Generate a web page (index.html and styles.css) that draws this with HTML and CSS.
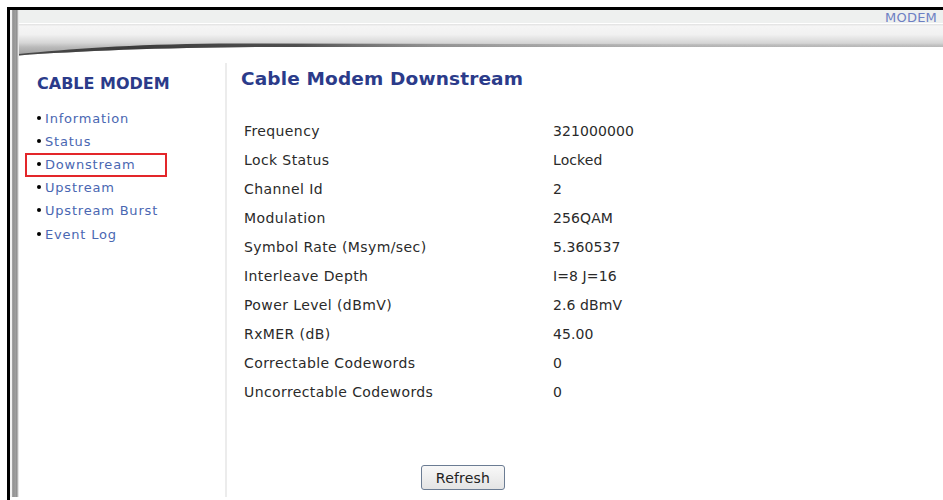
FILE: index.html
```html
<!DOCTYPE html>
<html lang="en">
<head>
<meta charset="utf-8">
<title>Cable Modem Downstream</title>
<link rel="stylesheet" href="styles.css">
</head>
<body>
<div class="frame">
  <div class="rail"></div>
  <div class="page">
    <header class="masthead">
      <div class="topbar"><span class="brand">MODEM</span></div>
      <svg class="swoosh" viewBox="0 0 924 35" preserveAspectRatio="none" aria-hidden="true">
        <defs>
          <linearGradient id="tube" x1="0" y1="0" x2="0" y2="33" gradientUnits="userSpaceOnUse">
            <stop offset="0" stop-color="#d8d8d8"/>
            <stop offset="0.1" stop-color="#f5f5f5"/>
            <stop offset="0.35" stop-color="#f1f1f1"/>
            <stop offset="0.6" stop-color="#d6d6d6"/>
            <stop offset="0.73" stop-color="#bababa"/>
            <stop offset="1" stop-color="#9a9a9a"/>
          </linearGradient>
          <linearGradient id="wedge" x1="0" y1="0" x2="924" y2="0" gradientUnits="userSpaceOnUse">
            <stop offset="0" stop-color="#3a3a3a" stop-opacity="0.85"/>
            <stop offset="0.12" stop-color="#2e2e2e" stop-opacity="0.9"/>
            <stop offset="0.3" stop-color="#3a3a3a" stop-opacity="0.85"/>
            <stop offset="0.45" stop-color="#707070" stop-opacity="0.6"/>
            <stop offset="0.7" stop-color="#9c9c9c" stop-opacity="0.35"/>
            <stop offset="1" stop-color="#b0b0b0" stop-opacity="0.2"/>
          </linearGradient>
        </defs>
        <!-- light tube with a curved lower edge -->
        <path d="M0 1 H924 V24 L250 24 C150 24.5 60 28 0 32.5 Z" fill="url(#tube)"/>
        <!-- dark tapered sweep along the lower edge -->
        <path d="M0 31 C50 26 110 21.5 200 20.5 L924 21.5 L924 24 L250 24 C150 24.5 60 28 0 32.5 Z" fill="url(#wedge)"/>
      </svg>
    </header>
    <div class="layout">
      <nav class="sidebar">
        <h2 class="sidebar-title">CABLE MODEM</h2>
        <ul class="menu">
          <li><a href="#">Information</a></li>
          <li><a href="#">Status</a></li>
          <li class="current"><a href="#">Downstream</a></li>
          <li><a href="#">Upstream</a></li>
          <li><a href="#">Upstream Burst</a></li>
          <li><a href="#">Event Log</a></li>
        </ul>
      </nav>
      <main class="content">
        <h1 class="title">Cable Modem Downstream</h1>
        <table class="stats">
          <tr><td>Frequency</td><td>321000000</td></tr>
          <tr><td>Lock Status</td><td>Locked</td></tr>
          <tr><td>Channel Id</td><td>2</td></tr>
          <tr><td>Modulation</td><td>256QAM</td></tr>
          <tr><td>Symbol Rate (Msym/sec)</td><td>5.360537</td></tr>
          <tr><td>Interleave Depth</td><td>I=8 J=16</td></tr>
          <tr><td>Power Level (dBmV)</td><td>2.6 dBmV</td></tr>
          <tr><td>RxMER (dB)</td><td>45.00</td></tr>
          <tr><td>Correctable Codewords</td><td>0</td></tr>
          <tr><td>Uncorrectable Codewords</td><td>0</td></tr>
        </table>
        <div class="actions"><button class="btn" type="button">Refresh</button></div>
      </main>
    </div>
  </div>
</div>
</body>
</html>
```

FILE: styles.css
```css
html, body {
  margin: 0;
  padding: 0;
  background: #fff;
}

body {
  font-family: "DejaVu Sans", Verdana, sans-serif;
  color: #2a2a2a;
  overflow: hidden;
}

.frame {
  margin: 7px 0 0 7px;
  height: 493px;
  box-sizing: border-box;
  padding-bottom: 3px;
  border-top: 3px solid #000;
  border-left: 3px solid #000;
  display: flex;
}

/* vertical bevel strip along the left edge */
.rail {
  width: 9px;
  flex: none;
  background: linear-gradient(to right,
    #f2f2f2 0, #f2f2f2 2px,
    #a9a9a9 2px, #8f8f8f 4px, #a4a4a4 5px, #8c8c8c 7px,
    #d8d8d8 8px, #f4f4f4 9px);
}

.page {
  flex: 1;
  display: flex;
  flex-direction: column;
  min-width: 0;
}

.topbar {
  height: 13px;
  background: #eef0ef;
  text-align: right;
  padding-right: 6px;
  line-height: 13px;
}

.brand {
  font-size: 13px;
  letter-spacing: 0.2px;
  color: #6d80c3;
}

.swoosh {
  display: block;
  width: 100%;
  height: 35px;
}

.layout {
  flex: 1;
  display: flex;
}

.sidebar {
  width: 208px;
  flex: none;
  box-sizing: border-box;
  margin-top: 5px;
  padding: 11px 0 0 18px;
  border-right: 2px solid #ececec;
}

.sidebar-title {
  margin: 0;
  font-size: 16px;
  line-height: 19px;
  font-weight: bold;
  color: #2b3b8a;
}

.menu {
  list-style: none;
  margin: 13.5px 0 0;
  padding: 0;
}

.menu li {
  position: relative;
  font-size: 13px;
  line-height: 23px;
}

.menu li:last-child {
  margin-top: 1px;
}

.menu li::before {
  content: "";
  display: inline-block;
  width: 4px;
  height: 4px;
  border-radius: 50%;
  background: #000;
  margin-right: 4px;
  vertical-align: 3px;
}

.menu a {
  color: #4a67b2;
  text-decoration: none;
  letter-spacing: 0.8px;
}

/* red highlight box around the active entry */
.menu li.current::after {
  content: "";
  position: absolute;
  left: -12px;
  top: 0.5px;
  width: 142px;
  height: 24px;
  box-sizing: border-box;
  border: 2px solid #e3262a;
}

.content {
  flex: 1;
  padding: 10px 0 0 14px;
}

.title {
  margin: 0;
  font-size: 18.5px;
  line-height: 22px;
  font-weight: bold;
  letter-spacing: 0.15px;
  color: #2b3b8a;
}

.stats {
  margin-top: 26px;
  border-collapse: collapse;
  font-size: 14px;
}

.stats td {
  height: 29px;
  padding: 0 0 0 3px;
  vertical-align: middle;
}

.stats td:first-child {
  width: 306px;
  letter-spacing: 0.4px;
}

.stats td:last-child {
  letter-spacing: 0.1px;
}

.actions {
  margin: 59px 0 0 180px;
}

.btn {
  width: 84px;
  height: 25px;
  box-sizing: border-box;
  border: 1px solid #6b7c93;
  border-radius: 3px;
  background: linear-gradient(#f8f8f8, #e4e4e4);
  font-family: "DejaVu Sans", Verdana, sans-serif;
  font-size: 14px;
  letter-spacing: 0.2px;
  color: #222;
  padding: 0;
}
```
